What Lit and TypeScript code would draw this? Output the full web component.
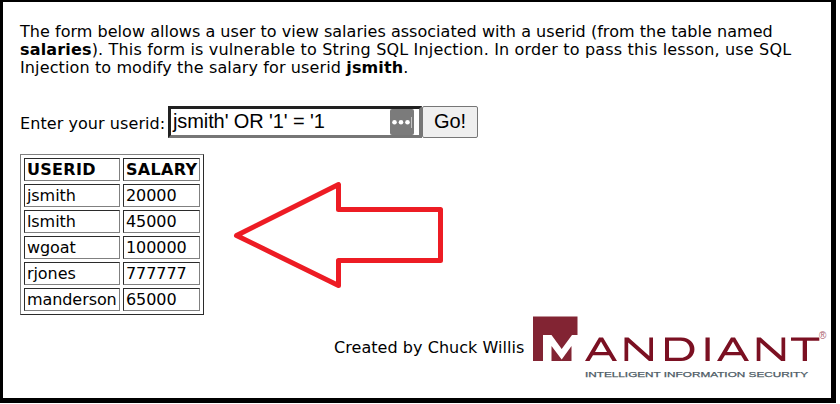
import { LitElement, html, css } from "lit";
import { customElement } from "lit/decorators.js";

const rows: [string, string][] = [
  ["jsmith", "20000"],
  ["lsmith", "45000"],
  ["wgoat", "100000"],
  ["rjones", "777777"],
  ["manderson", "65000"],
];

@customElement("app-root")
export class AppRoot extends LitElement {
  static styles = css`
    :host {
      display: block;
      width: 836px;
      height: 403px;
      box-sizing: border-box;
      border: solid #000;
      border-width: 2px 5px 5px 3px;
      background: #fff;
      color: #000;
      font: 16px/18px Verdana, "DejaVu Sans", sans-serif;
      position: relative;
      overflow: hidden;
    }
    .page { padding: 21px 0 0 17px; }
    .intro { margin: 0; white-space: nowrap; height: 54px; }
    .line { display: block; letter-spacing: 0.035px; }
    .line.second { letter-spacing: 0.165px; }
    .line.third { letter-spacing: 0.12px; }
    .form { display: flex; margin-top: 29px; height: 32px; align-items: flex-start; }
    .label { width: 148px; padding-top: 9px; white-space: nowrap; box-sizing: border-box; letter-spacing: 0.07px; }
    .field {
      box-sizing: border-box;
      width: 254px;
      height: 32px;
      border: 3px solid;
      border-color: #212121 #767676 #767676 #212121;
      display: flex;
      justify-content: space-between;
      padding: 0 5px 0 2px;
      font: 20px/25px "Liberation Sans", Arial, sans-serif;
      letter-spacing: -0.1px;
      white-space: nowrap;
    }
    .dots { display: block; width: 24px; height: 26px; }
    .go {
      box-sizing: border-box;
      width: 56px;
      height: 32px;
      padding: 0 0 2px;
      border: 1px solid #767676;
      border-radius: 2px;
      background: #efefef;
      color: #000;
      font: 20px/28px "Liberation Sans", Arial, sans-serif;
    }
    table {
      margin-top: 16px;
      width: 184px;
      table-layout: fixed;
      border: 1px solid;
      border-color: #808080 #2b2b2b #2b2b2b #808080;
      border-collapse: separate;
      border-spacing: 3px;
    }
    th, td {
      box-sizing: border-box;
      height: 23px;
      padding: 0 0 0 2px;
      border: 1px solid;
      border-color: #2b2b2b #808080 #808080 #2b2b2b;
      text-align: left;
      line-height: 21px;
      white-space: nowrap;
    }
    th { letter-spacing: 0.3px; }
    td { letter-spacing: -0.08px; }
    .first { width: 96px; }
    .arrow { position: absolute; left: 227px; top: 178px; width: 220px; height: 112px; }
    .credit { display: flex; margin-left: 314px; }
    .by { width: 195px; padding-top: 24px; white-space: nowrap; letter-spacing: 0.05px; }
    .logo { display: block; width: 300px; height: 70px; flex: none; }
    .name { font-family: "Liberation Sans", Arial, sans-serif; }
  `;

  render() {
    return html`
      <div class="page">
        <p class="intro">
          <span class="line">The form below allows a user to view salaries associated with a userid (from the table named</span>
          <span class="line second"><b>salaries</b>). This form is vulnerable to String SQL Injection. In order to pass this lesson, use SQL</span>
          <span class="line third">Injection to modify the salary for userid <b>jsmith</b>.</span>
        </p>
        <div class="form">
          <span class="label">Enter your userid:</span>
          <div class="field">
            <span>jsmith' OR '1' = '1</span>
            <svg class="dots" viewBox="0 0 24 26">
              <rect width="24" height="26" rx="2" fill="#7b7b7b" />
              <g fill="#fff"><circle cx="4.5" cy="13.3" r="2.3" /><circle cx="11" cy="13.3" r="2.3" /><circle cx="17.5" cy="13.3" r="2.3" /></g>
              <path d="M21.5 8V19" stroke="#c4c4c4" />
            </svg>
          </div>
          <button class="go">Go!</button>
        </div>
        <table>
          <tr><th class="first">USERID</th><th>SALARY</th></tr>
          ${rows.map(([user, salary]) => html`<tr><td>${user}</td><td>${salary}</td></tr>`)}
        </table>
        <div class="credit">
          <span class="by">Created by Chuck Willis</span>
          <svg class="logo" viewBox="529 315 300 70">
            <path d="M533 316.5H577.5V335H572L561.7 349L551.5 335H543V361H533Z" fill="#822433" />
            <path d="M551.5 346L561.7 359.5L571.5 346V361H551.5Z" fill="#822433" />
            <g fill="#7b1022" fill-rule="evenodd">
              <path d="M585 361L599 337.5H603L617 361H612.5L609 355.3H593L589.5 361ZM595 352H607L601 341.5Z" />
              <path d="M624.5 361V337.5H628.5L649.3 356V337.5H653V361H649L628.2 342.5V361Z" />
              <path d="M665 337.5H681C699 337.5 699 361 681 361H665ZM669 340.7V357.8H680.5C693 357.8 693 340.7 680.5 340.7Z" />
              <path d="M705.5 337.5H709.7V361H705.5Z" />
              <path d="M717 361L731 337.5H735L749 361H744.5L741 355.3H725L721.5 361ZM727 352H739L733 341.5Z" />
              <path d="M756.7 361V337.5H760.7L781.5 356V337.5H785.2V361H781.2L760.4 342.5V361Z" />
              <path d="M791 337.5H819.3V340.8H807V361H802.7V340.8H791Z" />
            </g>
            <text class="name" x="819" y="338.5" font-size="10" fill="#a9606c">®</text>
            <text class="name" x="585" y="377.3" font-size="7.6" fill="#4c5a64" stroke="#4c5a64" stroke-width="0.25" textLength="223" lengthAdjust="spacingAndGlyphs">INTELLIGENT INFORMATION SECURITY</text>
          </svg>
        </div>
      </div>
      <svg class="arrow" viewBox="230 180 220 112">
        <path d="M236.5 235.5L338.5 184.5V209.5H440.5V260.5H338.5V285.5Z" fill="none" stroke="#ed1c24" stroke-width="5" stroke-linejoin="round" />
      </svg>
    `;
  }
}
